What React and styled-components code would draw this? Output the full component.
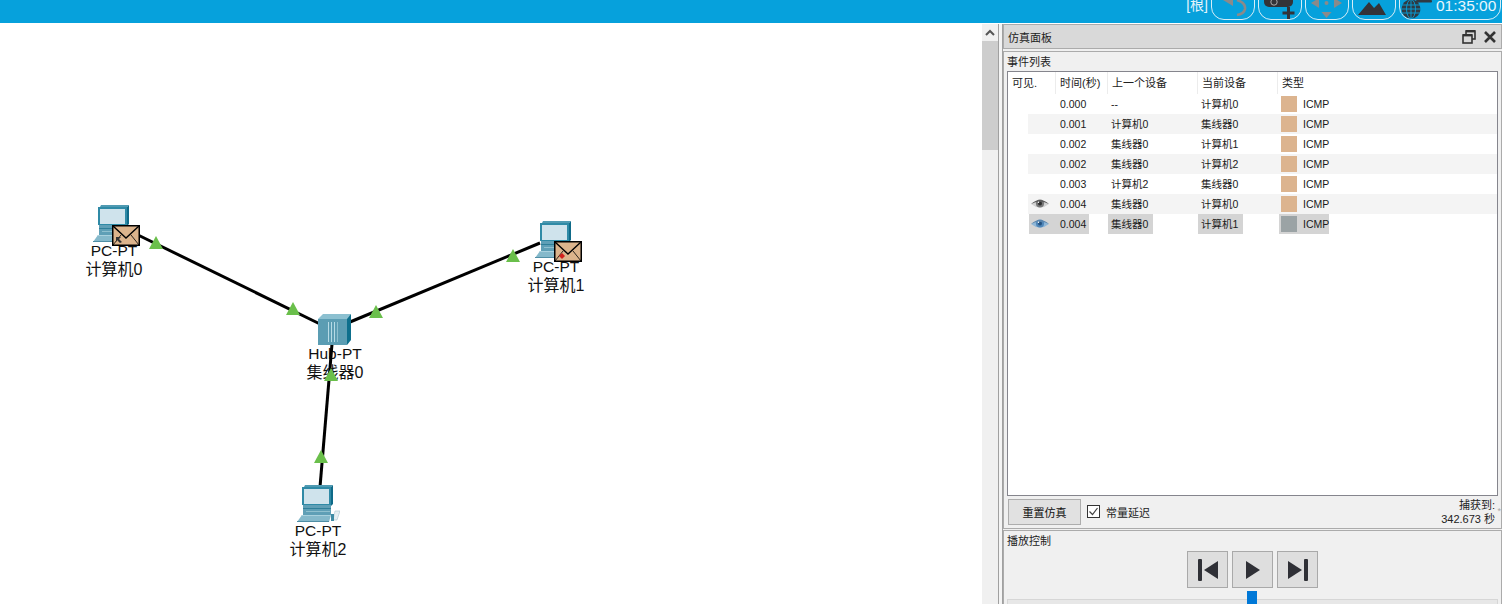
import React from 'react'
import styled, { createGlobalStyle } from 'styled-components'

const cjk = '"Liberation Sans", "Noto Sans CJK SC", sans-serif'

const GlobalStyle = createGlobalStyle`
  html, body {
    margin: 0;
    padding: 0;
    background: #fff;
    overflow: hidden;
    font-family: ${cjk};
  }
`

const Page = styled.div`
  width: 1502px;
  height: 604px;
  display: flex;
  flex-direction: column;
  overflow: hidden;
`

const TopBar = styled.div`
  height: 23px;
  flex: none;
  background: #06a1dc;
  display: flex;
  justify-content: flex-end;
  padding-right: 1px;
  overflow: hidden;
`
const RootTag = styled.span`
  color: #e4f4fb;
  font-size: 14px;
  line-height: 11px;
  margin-right: 2px;
`
const TopButton = styled.div`
  box-sizing: border-box;
  width: ${p => p.$w || 44}px;
  height: 34px;
  margin: -14px 0 0 ${p => p.$gap ?? 3}px;
  border: 1.5px solid #d6eef8;
  border-radius: 13px;
  display: flex;
  align-items: flex-end;
  justify-content: flex-start;
  position: relative;
`
const TopIcon = styled.svg`
  display: block;
  flex: none;
  overflow: hidden;
`
const Clock = styled.span`
  color: #e8f6fc;
  font-size: 15.5px;
  line-height: 11px;
  position: absolute;
  left: 36px;
  top: 13px;
  white-space: nowrap;
`

const Main = styled.div`
  flex: 1;
  display: flex;
  min-height: 0;
  border-top: 1px solid #fff;
`

const Canvas = styled.div`
  width: 982px;
  flex: none;
  position: relative;
  background: #fff;
  overflow: hidden;
`
const Links = styled.svg`
  position: absolute;
  left: 0;
  top: -24px;
  z-index: 2;
  pointer-events: none;
`
const Node = styled.div`
  position: absolute;
  left: ${p => p.$cx - 45}px;
  top: ${p => p.$top - 24}px;
  width: 90px;
  display: flex;
  flex-direction: column;
  align-items: center;
`
const DeviceIcon = styled.div`
  position: relative;
  z-index: 3;
  height: ${p => p.$h}px;
`
const ModelLabel = styled.div`
  font-size: 15.5px;
  line-height: 18px;
  color: #111;
  white-space: nowrap;
  margin-top: -1px;
`
const NameLabel = styled.div`
  font-size: 16px;
  line-height: 18px;
  color: #111;
  white-space: nowrap;
  margin-top: 1px;
`
const Envelope = styled.svg`
  position: absolute;
  left: ${p => p.$x}px;
  top: ${p => p.$y}px;
  z-index: 4;
`

const ScrollTrack = styled.div`
  width: 16px;
  flex: none;
  background: #f0f0f0;
  display: flex;
  flex-direction: column;
`
const ScrollArrow = styled.div`
  height: 17px;
  display: flex;
  align-items: center;
  justify-content: center;
`
const ScrollThumb = styled.div`
  height: 109px;
  background: #cdcdcd;
`

const Splitter = styled.div`
  width: 3px;
  flex: none;
  background: #f4f4f4;
  border-left: 1px solid #a0a0a0;
  border-right: 1px solid #a0a0a0;
`

const Panel = styled.div`
  flex: 1;
  min-width: 0;
  display: flex;
  flex-direction: column;
  background: #f0f0f0;
`
const PanelTitle = styled.div`
  box-sizing: border-box;
  height: 25px;
  flex: none;
  background: #d9d9d9;
  border: 1px solid #ababab;
  display: flex;
  align-items: center;
  justify-content: space-between;
  padding: 0 4px;
  font-size: 11px;
  color: #222;
`
const WindowIcons = styled.div`
  display: flex;
  gap: 7px;
`
const Group = styled.div`
  box-sizing: border-box;
  border: 1px solid #ababab;
  margin-top: ${p => p.$mt}px;
  height: ${p => p.$h}px;
  flex: none;
  padding: 0 3px;
  display: flex;
  flex-direction: column;
`
const GroupTitle = styled.div`
  font-size: 11px;
  line-height: 14px;
  color: #222;
  margin-top: 3px;
`
const TableBox = styled.div`
  box-sizing: border-box;
  height: 425px;
  margin-top: 2px;
  width: 491px;
  background: #fff;
  border: 1px solid #85858d;
  font-size: 10.5px;
  color: #1a1a1a;
`
const HeadRow = styled.div`
  height: 22px;
  display: grid;
  grid-template-columns: 48px 52px 90px 80px 1fr;
`
const HeadCell = styled.div`
  font-size: 11px;
  line-height: 22px;
  padding-left: 4px;
  color: #222;
  border-right: ${p => (p.$last ? 'none' : '1px solid #ececec')};
`
const Row = styled.div`
  height: 20px;
  margin-left: 20px;
  padding-left: 1px;
  background: ${p => (p.$odd ? '#f4f4f4' : '#fff')};
  display: grid;
  grid-template-columns: 27px 52px 90px 81px 1fr;
  align-items: stretch;
`
const Cell = styled.div`
  justify-self: start;
  display: flex;
  align-items: center;
  line-height: 20px;
  white-space: nowrap;
  padding: 0 5px 0 3px;
  background: ${p => (p.$sel ? '#d4d4d4' : 'transparent')};
`
const EyeCell = styled(Cell)`
  width: 27px;
  box-sizing: border-box;
  padding: 0 2px;
`
const TimeCell = styled(Cell)`
  padding: 0 3px 0 4px;
`
const TypeCell = styled(Cell)`
  padding: 0 0 0 2px;
  gap: 6px;
`
const Swatch = styled.span`
  width: 16px;
  height: 16px;
  background: ${p => p.$color};
`
const ControlRow = styled.div`
  height: 31px;
  display: flex;
  align-items: center;
  font-size: 11px;
  color: #222;
  margin-left: 1px;
`
const ResetButton = styled.div`
  box-sizing: border-box;
  width: 73px;
  height: 26px;
  background: #e1e1e1;
  border: 1px solid #adadad;
  display: flex;
  align-items: center;
  justify-content: center;
  font-size: 11px;
  color: #111;
`
const CheckBox = styled.span`
  box-sizing: border-box;
  width: 13px;
  height: 13px;
  margin-left: 6px;
  background: #fff;
  border: 1px solid #333;
  display: flex;
  align-items: center;
  justify-content: center;
`
const CheckLabel = styled.span`
  margin-left: 6px;
  font-size: 11px;
`
const Capture = styled.div`
  margin-left: auto;
  margin-right: 3px;
  text-align: right;
  line-height: 14px;
  position: relative;
`
const Busy = styled.span`
  position: absolute;
  right: -6px;
  top: 6px;
  color: #aaa;
  font-size: 9px;
`
const PlayRow = styled.div`
  display: flex;
  justify-content: center;
  gap: 4px;
  margin-top: 3px;
`
const PlayButton = styled.div`
  box-sizing: border-box;
  width: 41px;
  height: 37px;
  background: #dedede;
  border: 1px solid #a9a9a9;
  display: flex;
  align-items: center;
  justify-content: center;
`
const Slider = styled.div`
  position: relative;
  height: 17px;
  width: 491px;
`
const SliderTrack = styled.div`
  position: absolute;
  left: 0;
  right: 0;
  top: 11px;
  height: 7px;
  background: #e7e7e7;
  border: 1px solid #d6d6d6;
`
const SliderThumb = styled.div`
  position: absolute;
  left: 240px;
  top: 3px;
  width: 10px;
  height: 14px;
  background: #0078d7;
`

const PcIcon = () => (
  <svg width="44" height="38" viewBox="0 0 44 38" style={{ display: 'block' }}>
    <polygon points="9,0 37,0 35,2 8,2" fill="#4f9ab2" />
    <polygon points="6,2 35,2 35,20 6,20" fill="#2f8aa6" />
    <polygon points="35,2 37,0 37,19 35,21" fill="#0f6a88" />
    <rect x="8" y="4" width="25" height="15" fill="#cfe3ec" />
    <rect x="7" y="20" width="28" height="10" fill="#5f9fb6" />
    <rect x="7" y="23" width="28" height="1" fill="#2f7f99" />
    <rect x="10" y="26" width="24" height="1" fill="#8fc0cf" />
    <polygon points="6,30 35,30 33,37 1,37" fill="#85b9cb" />
    <polygon points="6,30 35,30 35,31 5,31" fill="#a9d1de" />
    <rect x="1" y="36" width="32" height="1" fill="#4f8ea5" />
    <polygon points="39,26 44,26 41,35 37,35" fill="#e4eef2" stroke="#a8c4ce" strokeWidth="0.6" />
    <rect x="35" y="29" width="3" height="7" fill="#3e8ba4" />
  </svg>
)

const HubIcon = () => (
  <svg width="34" height="31" viewBox="0 0 34 31" style={{ display: 'block' }}>
    <polygon points="0,5 5,0 33,0 30,5" fill="#8cc0d0" />
    <polygon points="0,5 29,5 29,31 0,31" fill="#5b9db3" />
    <polygon points="29,5 33,0 33,26 29,31" fill="#0d6f8c" />
    <rect x="10" y="8" width="1" height="20" fill="#b6dbe6" />
    <rect x="13" y="8" width="1" height="20" fill="#b6dbe6" />
    <rect x="16" y="8" width="1" height="20" fill="#b6dbe6" />
    <rect x="19" y="8" width="1" height="20" fill="#8fc0cf" />
  </svg>
)

const Letter = ({ x, y, mark }) => (
  <Envelope $x={x} $y={y} width="28" height="21" viewBox="0 0 28 21">
    <rect x="0.75" y="0.75" width="26.5" height="19.5" fill="#dcb48c" stroke="#000" strokeWidth="1.5" />
    <polyline points="1,1 14,13 27,1" fill="none" stroke="#000" strokeWidth="1.4" />
    <line x1="1" y1="20" x2="9" y2="10" stroke="#000" strokeWidth="0.8" />
    <line x1="27" y1="20" x2="19" y2="10" stroke="#000" strokeWidth="0.8" />
    {mark === 'red'
      ? <polygon points="5,15 8,12 11,15 8,18" fill="#d3201c" />
      : <polygon points="4,12 9,12 7,14 10,17 8,18 5,15 4,17" fill="#333" />}
  </Envelope>
)

const Triangle = ({ x, y }) => (
  <polygon points={`${x},${y - 7} ${x + 7},${y + 6} ${x - 7},${y + 6}`} fill="#6abf4b" />
)

const Eye = ({ blue }) => (
  <svg width="18" height="14" viewBox="0 0 20 14">
    <path d="M0 7 Q10 -1 20 7 Q10 15 0 7Z" fill={blue ? '#8fb7d8' : '#d2d2d2'} />
    <circle cx="10" cy="6.5" r="4.5" fill={blue ? '#4f86b8' : '#777'} />
    <circle cx="10" cy="6.5" r="2.2" fill={blue ? '#24517f' : '#2e2e2e'} />
    <path d="M0 7 Q10 -2 20 7 Q10 2 0 7Z" fill={blue ? '#5b86ad' : '#5a5a5a'} />
    <circle cx="8.3" cy="5" r="0.8" fill="#fff" />
  </svg>
)

const events = [
  { time: '0.000', prev: '--', cur: '计算机0' },
  { time: '0.001', prev: '计算机0', cur: '集线器0' },
  { time: '0.002', prev: '集线器0', cur: '计算机1' },
  { time: '0.002', prev: '集线器0', cur: '计算机2' },
  { time: '0.003', prev: '计算机2', cur: '集线器0' },
  { time: '0.004', prev: '集线器0', cur: '计算机0', eye: 'gray' },
  { time: '0.004', prev: '集线器0', cur: '计算机1', eye: 'blue', sel: true },
]

export default function App() {
  return (
    <Page>
      <GlobalStyle />
      <TopBar>
        <RootTag>[根]</RootTag>
        <TopButton $gap={1}>
          <TopIcon width="41" height="19" viewBox="0 0 41 19">
            <polygon points="11,0 21,0 21,6" fill="#8a8a8a" />
            <path d="M25 0 Q34 3 33 9 Q32 14 25 15" fill="none" stroke="#8a8a8a" strokeWidth="2.6" />
          </TopIcon>
        </TopButton>
        <TopButton>
          <TopIcon width="41" height="19" viewBox="0 0 41 19">
            <rect x="5" y="-4" width="29" height="11" rx="5" fill="#333338" />
            <circle cx="15" cy="2" r="3.2" fill="none" stroke="#aaa" strokeWidth="1" />
            <rect x="28" y="7" width="3" height="12" fill="#333338" />
            <rect x="23.5" y="11.5" width="12" height="3" fill="#333338" />
          </TopIcon>
        </TopButton>
        <TopButton>
          <TopIcon width="41" height="19" viewBox="0 0 41 19">
            <polygon points="5,3 13,-2 13,8" fill="#8a8a8a" />
            <polygon points="36,3 28,-2 28,8" fill="#8a8a8a" />
            <circle cx="20.5" cy="3" r="2" fill="#8a8a8a" />
            <polygon points="15.5,12 25.5,12 20.5,18" fill="#8a8a8a" />
          </TopIcon>
        </TopButton>
        <TopButton>
          <TopIcon width="41" height="19" viewBox="0 0 41 19">
            <polygon points="5,15 16,2 21,8 26,3 33,15" fill="#333338" />
          </TopIcon>
        </TopButton>
        <TopButton $w={102}>
          <TopIcon width="36" height="19" viewBox="0 0 36 19">
            <circle cx="11" cy="9" r="9.5" fill="#2f3a42" />
            <g fill="none" stroke="#06a1dc" strokeWidth="0.9">
              <ellipse cx="11" cy="9" rx="4.5" ry="9.5" />
              <line x1="11" y1="0" x2="11" y2="19" />
              <line x1="1" y1="5" x2="21" y2="5" />
              <line x1="1" y1="9" x2="21" y2="9" />
              <line x1="1" y1="13" x2="21" y2="13" />
            </g>
            <rect x="16" y="0" width="16" height="2.5" rx="1" fill="#2f3a42" />
          </TopIcon>
          <Clock>01:35:00</Clock>
        </TopButton>
      </TopBar>

      <Main>
        <Canvas>
          <Links width="982" height="604">
            <g stroke="#000" strokeWidth="3">
              <line x1="138" y1="235" x2="320" y2="324" />
              <line x1="540" y1="243" x2="350" y2="322" />
              <line x1="332" y1="344" x2="320" y2="487" />
            </g>
            <Triangle x={156} y={243} />
            <Triangle x={293} y={309} />
            <Triangle x={376} y={312} />
            <Triangle x={513} y={256} />
            <Triangle x={331} y={375} />
            <Triangle x={321} y={457} />
          </Links>

          <Node $cx={114} $top={205}>
            <DeviceIcon $h={38}><PcIcon /></DeviceIcon>
            <ModelLabel>PC-PT</ModelLabel>
            <NameLabel>计算机0</NameLabel>
            <Letter x={43} y={20} mark="gray" />
          </Node>
          <Node $cx={556} $top={221}>
            <DeviceIcon $h={38}><PcIcon /></DeviceIcon>
            <ModelLabel>PC-PT</ModelLabel>
            <NameLabel>计算机1</NameLabel>
            <Letter x={43} y={20} mark="red" />
          </Node>
          <Node $cx={335} $top={314}>
            <DeviceIcon $h={32}><HubIcon /></DeviceIcon>
            <ModelLabel>Hub-PT</ModelLabel>
            <NameLabel>集线器0</NameLabel>
          </Node>
          <Node $cx={318} $top={485}>
            <DeviceIcon $h={38}><PcIcon /></DeviceIcon>
            <ModelLabel>PC-PT</ModelLabel>
            <NameLabel>计算机2</NameLabel>
          </Node>
        </Canvas>

        <ScrollTrack>
          <ScrollArrow>
            <svg width="10" height="7" viewBox="0 0 10 7">
              <polyline points="1,6 5,2 9,6" fill="none" stroke="#555" strokeWidth="2" />
            </svg>
          </ScrollArrow>
          <ScrollThumb />
        </ScrollTrack>
        <Splitter />

        <Panel>
          <PanelTitle>
            <span>仿真面板</span>
            <WindowIcons>
              <svg width="14" height="14" viewBox="0 0 14 14">
                <rect x="4" y="1" width="9" height="8" fill="none" stroke="#333" strokeWidth="1.6" />
                <rect x="1" y="5" width="9" height="8" fill="#d9d9d9" stroke="#333" strokeWidth="1.6" />
                <rect x="1" y="4" width="9" height="2.4" fill="#333" />
                <rect x="4" y="0" width="9" height="2.4" fill="#333" />
              </svg>
              <svg width="14" height="14" viewBox="0 0 14 14">
                <path d="M2 2 L12 12 M12 2 L2 12" stroke="#333" strokeWidth="2.6" />
              </svg>
            </WindowIcons>
          </PanelTitle>

          <Group $mt={2} $h={478}>
            <GroupTitle>事件列表</GroupTitle>
            <TableBox>
              <HeadRow>
                <HeadCell>可见.</HeadCell>
                <HeadCell>时间(秒)</HeadCell>
                <HeadCell>上一个设备</HeadCell>
                <HeadCell>当前设备</HeadCell>
                <HeadCell $last>类型</HeadCell>
              </HeadRow>
              {events.map((e, i) => (
                <Row key={i} $odd={i % 2 === 1}>
                  <EyeCell $sel={e.sel}>{e.eye && <Eye blue={e.eye === 'blue'} />}</EyeCell>
                  <TimeCell $sel={e.sel}>{e.time}</TimeCell>
                  <Cell $sel={e.sel}>{e.prev}</Cell>
                  <Cell $sel={e.sel}>{e.cur}</Cell>
                  <TypeCell $sel={e.sel}>
                    <Swatch $color={e.sel ? '#9ba3a5' : '#dcb48f'} />
                    ICMP
                  </TypeCell>
                </Row>
              ))}
            </TableBox>
            <ControlRow>
              <ResetButton>重置仿真</ResetButton>
              <CheckBox>
                <svg width="11" height="11" viewBox="0 0 11 11">
                  <polyline points="1.5,5.5 4.5,8.5 9.5,2" fill="none" stroke="#444" strokeWidth="1.2" />
                </svg>
              </CheckBox>
              <CheckLabel>常量延迟</CheckLabel>
              <Capture>
                捕获到:
                <br />
                342.673 秒
                <Busy>*</Busy>
              </Capture>
            </ControlRow>
          </Group>

          <Group $mt={1} $h={80}>
            <GroupTitle>播放控制</GroupTitle>
            <PlayRow>
              <PlayButton>
                <svg width="24" height="24" viewBox="0 0 24 24">
                  <rect x="2" y="1" width="4" height="22" rx="1" fill="#2f3036" />
                  <polygon points="22,3 8,12 22,21" fill="#2f3036" />
                </svg>
              </PlayButton>
              <PlayButton>
                <svg width="24" height="24" viewBox="0 0 24 24">
                  <polygon points="5,3 19,12 5,21" fill="#2f3036" />
                </svg>
              </PlayButton>
              <PlayButton>
                <svg width="24" height="24" viewBox="0 0 24 24">
                  <polygon points="2,3 16,12 2,21" fill="#2f3036" />
                  <rect x="18" y="1" width="4" height="22" rx="1" fill="#2f3036" />
                </svg>
              </PlayButton>
            </PlayRow>
            <Slider>
              <SliderTrack />
              <SliderThumb />
            </Slider>
          </Group>
        </Panel>
      </Main>
    </Page>
  )
}
